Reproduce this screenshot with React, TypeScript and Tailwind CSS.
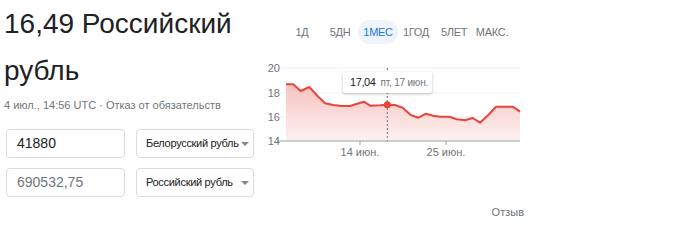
import React from "react"

const points: [number, number][] = [
  [26, 29.3], [33.3, 29.3], [40.7, 36], [49.3, 32], [57.3, 40.7], [65, 48.3], [73.3, 50],
  [81.7, 51], [90, 51], [97.3, 48.7], [104, 46.7], [110, 50.7], [120, 50.3], [127.3, 49.7],
  [135, 50], [142.7, 52.7], [150.7, 60], [158.3, 62.7], [166, 58.7], [173.3, 60.7], [180, 61.7],
  [189.3, 61.7], [196.7, 64.3], [205, 65.3], [212.7, 63], [220, 67.7], [228.3, 60], [236, 51.7],
  [244, 51.7], [252.7, 51.7], [260, 56.7],
]

const ranges = ["1Д", "5ДН", "1МЕС", "1ГОД", "5ЛЕТ", "МАКС."]

function Field({ value, muted }: { value: string; muted?: boolean }) {
  return (
    <div
      className={`w-[119px] h-[29px] rounded-[4px] border border-[#dadce0] flex items-center pl-[10px] text-[14px] ${
        muted ? "text-[#70757a]" : "text-[#202124]"
      }`}
    >
      {value}
    </div>
  )
}

function Select({ label }: { label: string }) {
  return (
    <div className="w-[118px] h-[29px] rounded-[4px] border border-[#dadce0] flex items-center pl-[9px] pr-[4px] text-[11px] text-[#202124] whitespace-nowrap">
      <span className="flex-1 tracking-[-0.3px]">{label}</span>
      <span className="w-0 h-0 border-l-[4px] border-r-[4px] border-t-[4px] border-l-transparent border-r-transparent border-t-[#80868b]" />
    </div>
  )
}

function Chart() {
  const line = points.map(([x, y], i) => `${i ? "L" : "M"}${x} ${y}`).join(" ")
  const area = `${line} L260 86 L26 86 Z`
  return (
    <div className="relative w-[270px] h-[110px]">
      <svg width="270" height="110" viewBox="0 0 270 110">
        <defs>
          <linearGradient id="fill" x1="0" y1="0" x2="0" y2="1">
            <stop offset="0" stopColor="#f6c3bf" />
            <stop offset="1" stopColor="#fdf1f0" />
          </linearGradient>
        </defs>
        {[13, 38, 62].map((y) => (
          <line key={y} x1="17" x2="260" y1={y} y2={y} stroke="#efefef" />
        ))}
        <path d={area} fill="url(#fill)" />
        <line x1="17" x2="260" y1="86" y2="86" stroke="#9aa0a6" />
        <line x1="100" x2="100" y1="86" y2="90" stroke="#9aa0a6" />
        <line x1="186" x2="186" y1="86" y2="90" stroke="#9aa0a6" />
        <line x1="127.3" x2="127.3" y1="13" y2="86" stroke="#70757a" strokeDasharray="2 2" />
        <path d={line} fill="none" stroke="#e8453c" strokeWidth="2" strokeLinejoin="round" />
        <circle cx="127.3" cy="49.7" r="3.5" fill="#e8453c" />
        <g fill="#70757a" fontSize="11" fontFamily="'Liberation Sans', Arial, sans-serif" textAnchor="end">
          <text x="20" y="17">20</text>
          <text x="20" y="42">18</text>
          <text x="20" y="66">16</text>
          <text x="20" y="90">14</text>
        </g>
        <g fill="#70757a" fontSize="11" fontFamily="'Liberation Sans', Arial, sans-serif" textAnchor="middle">
          <text x="100" y="101">14 июн.</text>
          <text x="186" y="101">25 июн.</text>
        </g>
      </svg>
      <div className="absolute left-[83px] top-[17px] w-[89px] h-[21px] bg-white rounded-[2px] shadow-[0_1px_3px_rgba(0,0,0,0.25)] flex items-center pl-[7px] gap-[5px] whitespace-nowrap">
        <span className="text-[11px] tracking-[-0.4px] text-[#202124]">17,04</span>
        <span className="text-[10px] tracking-[-0.2px] text-[#70757a]">пт, 17 июн.</span>
      </div>
    </div>
  )
}

export default function App() {
  return (
    <div className="w-[700px] h-[241px] bg-white flex font-['Liberation_Sans',Arial,sans-serif]">
      {/* converter */}
      <div className="w-[260px] pl-[4px]">
        <h1 className="text-[28px] leading-[47px] text-[#202124] font-normal">16,49 Российский рубль</h1>
        <div className="mt-[3px] text-[11px] leading-[16px] text-[#70757a]">
          4 июл., 14:56 UTC · Отказ от обязательств
        </div>
        <div className="mt-[16px] pl-[2px] flex flex-col gap-[10px]">
          <div className="flex gap-[11px]">
            <Field value="41880" />
            <Select label="Белорусский рубль" />
          </div>
          <div className="flex gap-[11px]">
            <Field value="690532,75" muted />
            <Select label="Российский рубль" />
          </div>
        </div>
      </div>

      {/* chart */}
      <div className="w-[270px] flex flex-col">
        <div className="mt-[20px] h-[24px] pl-[23px] flex items-center">
          {ranges.map((r) => (
            <div key={r} className="w-[38px] flex justify-center">
              <span
                className={`px-[5px] h-[24px] rounded-full flex items-center text-[11px] tracking-[-0.3px] ${
                  r === "1МЕС" ? "bg-[#eff3fb] text-[#1a73e8]" : "text-[#70757a]"
                }`}
              >
                {r}
              </span>
            </div>
          ))}
        </div>
        <div className="mt-[11px]">
          <Chart />
        </div>
        <div className="mt-[40px] pr-[6px] text-right text-[11px] leading-[14px] text-[#70757a]">Отзыв</div>
      </div>
    </div>
  )
}
